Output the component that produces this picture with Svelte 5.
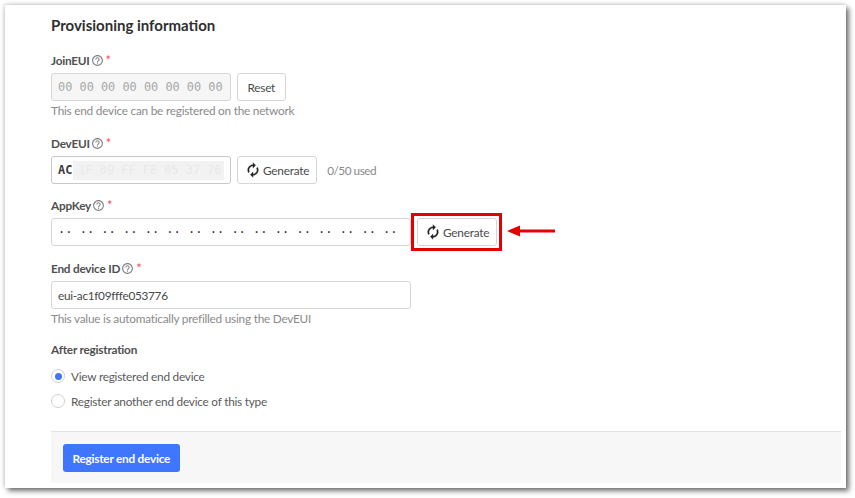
<script lang="ts">
  const refreshPath =
    "M12 6v3l4-4-4-4v3c-4.42 0-8 3.58-8 8 0 1.57.46 3.03 1.24 4.26L6.7 14.8c-.45-.83-.7-1.79-.7-2.8 0-3.31 2.69-6 6-6zm6.76 1.74L17.3 9.2c.44.84.7 1.79.7 2.8 0 3.31-2.69 6-6 6v-3l-4 4 4 4v-3c4.42 0 8-3.58 8-8 0-1.57-.46-3.03-1.24-4.26z";
  const helpPath =
    "M11 18h2v-2h-2v2zm1-16C6.48 2 2 6.48 2 12s4.48 10 10 10 10-4.48 10-10S17.52 2 12 2zm0 18c-4.41 0-8-3.59-8-8s3.59-8 8-8 8 3.59 8 8-3.59 8-8 8zm0-14c-2.21 0-4 1.79-4 4h2c0-1.1.9-2 2-2s2 .9 2 2c0 2-3 1.75-3 5h2c0-2.25 3-2.5 3-5 0-2.21-1.79-4-4-4z";
  const appKeyMask = Array(16).fill("··").join(" ");
</script>

{#snippet help()}
  <svg class="help" viewBox="0 0 24 24" aria-hidden="true"><path d={helpPath} /></svg>
{/snippet}

{#snippet refresh()}
  <svg class="refresh" viewBox="0 0 24 24" aria-hidden="true"><path d={refreshPath} /></svg>
{/snippet}

{#snippet label(text)}
  <div class="label">{text}{@render help()}<span class="req">*</span></div>
{/snippet}

<div class="page">
  <div class="card">
    <h2>Provisioning information</h2>

    <div class="field first">
      {@render label("JoinEUI")}
      <div class="row">
        <div class="input short mono disabled">00 00 00 00 00 00 00 00</div>
        <button class="reset">Reset</button>
      </div>
      <div class="hint">This end device can be registered on the network</div>
    </div>

    <div class="field dev">
      {@render label("DevEUI")}
      <div class="row">
        <div class="input short mono dev-input">
          <b>AC</b><span class="blurred">1F 09 FF FE 05 37 76</span>
        </div>
        <button>{@render refresh()}Generate</button>
        <span class="used">0/50 used</span>
      </div>
    </div>

    <div class="field key">
      {@render label("AppKey")}
      <div class="row">
        <div class="input long mono masked">{appKeyMask}</div>
        <button>{@render refresh()}Generate</button>
      </div>
    </div>

    <div class="field id">
      {@render label("End device ID")}
      <div class="input long id-input">eui-ac1f09fffe053776</div>
      <div class="hint">This value is automatically prefilled using the DevEUI</div>
    </div>

    <div class="field after">
      <div class="label">After registration</div>
      <label class="radio"><span class="dot checked"></span>View registered end device</label>
      <label class="radio"><span class="dot"></span>Register another end device of this type</label>
    </div>

    <div class="footer">
      <button class="primary">Register end device</button>
    </div>
  </div>

  <div class="callout"></div>
  <svg class="arrow" viewBox="0 0 48 12" aria-hidden="true">
    <path d="M0 6 L13 0.5 L13 4.5 L48 4.5 L48 7.5 L13 7.5 L13 11.5 Z" />
  </svg>
</div>

<style>
  :global(body) {
    background: #fff;
    font-family: "Lato", "Noto Sans", sans-serif;
    color: #3b3b3b;
  }

  .page {
    position: relative;
    width: 855px;
    height: 498px;
    padding: 5px 9px 10px 5px;
    box-sizing: border-box;
    overflow: hidden;
  }

  .card {
    height: 483px;
    box-sizing: border-box;
    padding: 12px 5px 5px 46px;
    background: #fff;
    box-shadow: 3px 3px 5px rgba(0, 0, 0, 0.55), -1px -1px 4px rgba(0, 0, 0, 0.18);
    display: flex;
    flex-direction: column;
  }

  h2 {
    margin: 0;
    font-size: 15px;
    line-height: 17px;
    font-weight: 700;
    color: #2f2f2f;
  }

  .field {
    display: flex;
    flex-direction: column;
  }
  .field.first { margin-top: 18px; }
  .field.dev { margin-top: 16px; }
  .field.key { margin-top: 13px; }
  .field.id { margin-top: 14px; }
  .field.after { margin-top: 14px; }

  .label,
  .hint,
  .used,
  .radio,
  button {
    font-size: 11.8px;
    letter-spacing: -0.23px;
  }

  .label {
    display: flex;
    align-items: center;
    height: 16px;
    margin-bottom: 5px;
    font-weight: 700;
    color: #505050;
  }

  .help {
    width: 13px;
    height: 13px;
    margin-left: 1px;
    fill: #808080;
  }

  .req {
    margin-left: 2px;
    font-size: 13px;
    color: #f0505a;
    font-weight: 400;
  }

  .row {
    display: flex;
    align-items: center;
    gap: 6px;
  }

  .input {
    height: 28px;
    box-sizing: border-box;
    border: 1px solid #d6d6d6;
    border-radius: 3px;
    padding: 0 6px;
    display: flex;
    align-items: center;
    color: #3b3b3b;
    white-space: pre;
  }
  .short { width: 180px; }
  .long { width: 360px; }

  .id-input {
    font-size: 11.8px;
    letter-spacing: -0.3px;
    color: #484848;
  }

  .mono {
    font-family: "DejaVu Sans Mono", monospace;
    font-size: 11.9px;
  }
  .disabled {
    background: #f6f6f6;
    color: #a8a8a8;
  }
  .masked {
    font-size: 12px;
    color: #333;
  }

  .dev-input {
    border-color: #c8c8c8;
  }
  .dev-input b {
    font-weight: 700;
    color: #3b3b3b;
  }
  .blurred {
    margin-left: 1px;
    height: 19px;
    width: 154px;
    padding-left: 5px;
    box-sizing: border-box;
    line-height: 19px;
    background: #f2f2f2;
    color: #e9e9e9;
  }

  .used {
    margin-left: 4px;
    letter-spacing: -0.5px;
    color: #8a8a8a;
  }

  button {
    height: 28px;
    box-sizing: border-box;
    padding: 0 7px;
    display: flex;
    align-items: center;
    gap: 2px;
    border: 1px solid #d6d6d6;
    border-radius: 3px;
    background: #fff;
    font-family: inherit;
    color: #4a4a4a;
  }
  .reset {
    padding: 0 9.5px;
  }

  .refresh {
    width: 16px;
    height: 16px;
    fill: #222;
    stroke: #222;
    stroke-width: 0.5;
  }

  .hint {
    margin-top: 2px;
    line-height: 16px;
    color: #8a8a8a;
  }

  .radio {
    display: flex;
    align-items: center;
    gap: 6px;
    height: 14px;
    margin-bottom: 11px;
    color: #5a5a5a;
  }
  .label + .radio { margin-top: 7px; }

  .dot {
    width: 14px;
    height: 14px;
    box-sizing: border-box;
    border: 1px solid #d0d0d0;
    border-radius: 50%;
    display: flex;
    align-items: center;
    justify-content: center;
  }
  .dot.checked::after {
    content: "";
    width: 7px;
    height: 7px;
    border-radius: 50%;
    background: #3f76ff;
  }

  .footer {
    margin-top: auto;
    height: 52px;
    box-sizing: border-box;
    padding: 12px;
    border-top: 1px solid #e2e2e2;
    background: #f7f7f7;
  }

  .primary {
    border: none;
    background: #3f76ff;
    color: #fff;
    font-weight: 700;
    padding: 0 9.5px;
  }

  /* annotation drawn over the screenshot */
  .callout {
    position: absolute;
    left: 411px;
    top: 213px;
    width: 91px;
    height: 38px;
    box-sizing: border-box;
    border: 3px solid #e60000;
  }
  .arrow {
    position: absolute;
    left: 507px;
    top: 224.5px;
    width: 48px;
    height: 12px;
    fill: #e60000;
  }
</style>
